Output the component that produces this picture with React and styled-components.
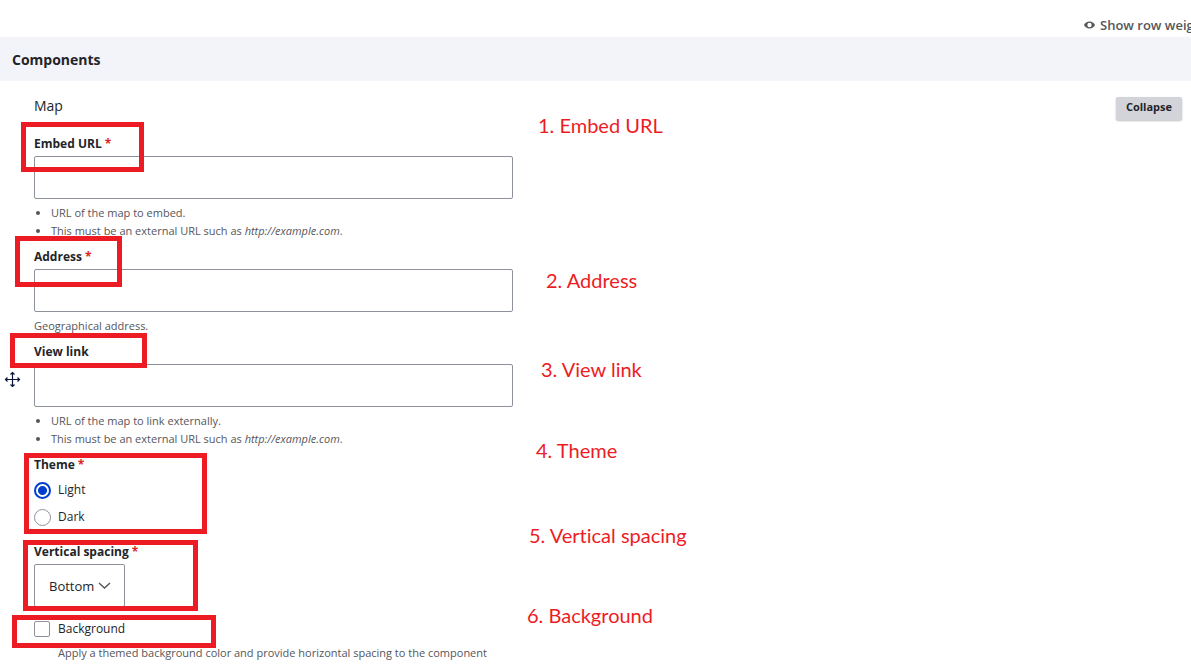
import React from "react";
import styled, { createGlobalStyle } from "styled-components";

const GlobalStyle = createGlobalStyle`
  *, *::before, *::after { box-sizing: border-box; }
  body {
    margin: 0;
    background: #fff;
    color: #232429;
    font-family: "Open Sans", "Noto Sans", sans-serif;
    font-size: 12px;
    line-height: 18px;
  }
  input, select, button { font-family: inherit; color: inherit; }
`;

const Page = styled.main`
  position: relative;
  height: 100vh;
  overflow: hidden;
`;

const TopBar = styled.div`
  display: flex;
  justify-content: flex-end;
  padding: 16px 0 3px;
`;

const WeightToggle = styled.button`
  display: flex;
  align-items: center;
  gap: 5px;
  width: 107px;
  padding: 0;
  border: 0;
  background: none;
  overflow: hidden;
  white-space: nowrap;
  color: #55565b;
  font-size: 13px;
  font-weight: 600;
  line-height: 18px;
  svg { flex: none; }
`;

const SectionHeader = styled.h2`
  margin: 0;
  padding: 14px 12px 12px;
  background: #f3f4f9;
  font-size: 14px;
  font-weight: 700;
  line-height: 18px;
`;

const ComponentRow = styled.section`
  display: flex;
  align-items: flex-start;
  padding-right: 9px;
`;

const DragHandle = styled.a`
  display: flex;
  align-self: center;
  flex: none;
  width: 34px;
  padding-left: 4px;
`;

const Form = styled.form`
  flex: 1;
  min-width: 0;
  padding: 16px 0;
`;

const TypeName = styled.div`
  margin-bottom: 20px;
  font-size: 14px;
`;

const CollapseButton = styled.button`
  flex: none;
  margin-top: 16px;
  padding: 1px 10px 4px;
  border: 0;
  border-radius: 2px;
  background: #d3d4d9;
  box-shadow: 0 1px 2px rgba(0, 0, 0, 0.25);
  font-size: 11px;
  font-weight: 700;
  line-height: 18px;
`;

const Field = styled.div`
  margin-bottom: ${(p) => (p.$last ? 13 : 8)}px;
`;

const Label = styled.label`
  display: block;
  margin-bottom: 3px;
  font-weight: 700;
`;

const Required = styled.span`
  margin-left: 3px;
  color: #dc2323;
`;

const TextInput = styled.input`
  display: block;
  width: 100%;
  max-width: 479px;
  height: 43px;
  padding: 0 14px;
  border: 1px solid #8e929c;
  border-radius: 2px;
  background: #fff;
  font-size: 13px;
`;

const Description = styled.div`
  margin-top: 5px;
  color: #55565b;
  font-size: 11px;
`;

const HintList = styled.ul`
  margin: 5px 0 0;
  padding-left: 17px;
  color: #55565b;
  font-size: 11px;
`;

const OptionGroup = styled.fieldset`
  min-width: 0;
  margin: 0 0 17px;
  padding: 0;
  border: 0;
`;

const Legend = styled.legend`
  padding: 0;
  font-weight: 700;
`;

const Options = styled.div`
  display: grid;
  gap: 9px;
  padding-top: 7px;
`;

const Option = styled.label`
  display: grid;
  grid-template-columns: 24px auto;
  justify-content: start;
  align-items: center;
`;

const Radio = styled.input`
  appearance: none;
  width: 17px;
  height: 17px;
  margin: 0;
  border: 1px solid #8e929c;
  border-radius: 50%;
  background: #fff;
  &:checked {
    border: 2px solid #003ecc;
    background: radial-gradient(circle, #003ecc 4px, #fff 5px);
  }
`;

const Checkbox = styled.input`
  appearance: none;
  width: 16px;
  height: 16px;
  margin: 0;
  border: 1px solid #8e929c;
  border-radius: 2px;
  background: #fff;
`;

const OptionNote = styled(Description)`
  margin-top: 6px;
  padding-left: 24px;
`;

const SelectWrap = styled.div`
  display: grid;
  grid-template-columns: 91px;
  align-items: center;
  svg {
    grid-area: 1 / 1;
    justify-self: end;
    margin-right: 14px;
    pointer-events: none;
  }
`;

const Select = styled.select`
  grid-area: 1 / 1;
  appearance: none;
  height: 43px;
  padding: 0 14px;
  border: 1px solid #8e929c;
  border-radius: 2px;
  background: #fff;
  font-size: 13px;
`;

const MarkerBox = styled.div`
  position: absolute;
  left: ${(p) => p.$x}px;
  top: ${(p) => p.$y}px;
  width: ${(p) => p.$w}px;
  height: ${(p) => p.$h}px;
  border: 5px solid #ed1c24;
  pointer-events: none;
`;

const MarkerNote = styled.div`
  position: absolute;
  left: ${(p) => p.$x}px;
  top: ${(p) => p.$y}px;
  color: #ed1c24;
  font-family: "Lato", "Open Sans", sans-serif;
  font-size: 20px;
  font-variant-ligatures: none;
  line-height: 24px;
  white-space: nowrap;
`;

const markers = [
  { note: "1. Embed URL", box: [21, 122, 123, 50], at: [538, 113] },
  { note: "2. Address", box: [15, 236, 107, 51], at: [546, 268] },
  { note: "3. View link", box: [10, 333, 137, 35], at: [541, 357] },
  { note: "4. Theme", box: [24, 453, 183, 81], at: [536, 438] },
  { note: "5. Vertical spacing", box: [23, 540, 175, 71], at: [529, 523] },
  { note: "6. Background", box: [12, 615, 204, 33], at: [527, 603] },
];

function EyeIcon() {
  return (
    <svg width="11" height="8" viewBox="0 0 11 8" aria-hidden="true">
      <path
        fill="#55565b"
        fillRule="evenodd"
        d="M5.5 0.5C3 0.5 1 1.9 0 4c1 2.1 3 3.5 5.5 3.5S10 6.1 11 4C10 1.9 8 0.5 5.5 0.5zM5.5 1.8a2.2 2.2 0 1 1 0 4.4a2.2 2.2 0 0 1 0-4.4z"
      />
    </svg>
  );
}

function MoveIcon() {
  return (
    <svg width="17" height="17" viewBox="0 0 17 17" fill="none" stroke="#0b1437" aria-hidden="true">
      <path d="M8.5 1.5v14M1.5 8.5h14" strokeWidth="1.2" />
      <path
        d="M6.5 3.5L8.5 1.5L10.5 3.5M6.5 13.5L8.5 15.5L10.5 13.5M3.5 6.5L1.5 8.5L3.5 10.5M13.5 6.5L15.5 8.5L13.5 10.5"
        strokeWidth="1.2"
      />
    </svg>
  );
}

function ChevronIcon() {
  return (
    <svg width="13" height="8" viewBox="0 0 13 8" fill="none" aria-hidden="true">
      <path d="M1 1L6.5 6L12 1" stroke="#55565b" strokeWidth="1.4" />
    </svg>
  );
}

function Star() {
  return <Required aria-hidden="true">*</Required>;
}

function UrlHints({ first }) {
  return (
    <HintList>
      <li>{first}</li>
      <li>
        This must be an external URL such as <em>http://example.com</em>.
      </li>
    </HintList>
  );
}

export default function App() {
  return (
    <>
      <GlobalStyle />
      <Page>
        <TopBar>
          <WeightToggle type="button">
            <EyeIcon />
            Show row weights
          </WeightToggle>
        </TopBar>
        <SectionHeader>Components</SectionHeader>
        <ComponentRow>
          <DragHandle href="#" aria-label="Drag to re-order">
            <MoveIcon />
          </DragHandle>
          <Form>
            <TypeName>Map</TypeName>
            <Field>
              <Label htmlFor="embed-url">
                Embed URL
                <Star />
              </Label>
              <TextInput id="embed-url" type="url" required />
              <UrlHints first="URL of the map to embed." />
            </Field>
            <Field>
              <Label htmlFor="address">
                Address
                <Star />
              </Label>
              <TextInput id="address" type="text" required />
              <Description>Geographical address.</Description>
            </Field>
            <Field>
              <Label htmlFor="view-link">View link</Label>
              <TextInput id="view-link" type="url" />
              <UrlHints first="URL of the map to link externally." />
            </Field>
            <OptionGroup>
              <Legend>
                Theme
                <Star />
              </Legend>
              <Options>
                <Option>
                  <Radio type="radio" name="theme" value="light" defaultChecked />
                  Light
                </Option>
                <Option>
                  <Radio type="radio" name="theme" value="dark" />
                  Dark
                </Option>
              </Options>
            </OptionGroup>
            <Field $last>
              <Label htmlFor="spacing">
                Vertical spacing
                <Star />
              </Label>
              <SelectWrap>
                <Select id="spacing" defaultValue="bottom">
                  <option value="bottom">Bottom</option>
                </Select>
                <ChevronIcon />
              </SelectWrap>
            </Field>
            <Option>
              <Checkbox type="checkbox" />
              Background
            </Option>
            <OptionNote>
              Apply a themed background color and provide horizontal spacing to the component
            </OptionNote>
          </Form>
          <CollapseButton type="button">Collapse</CollapseButton>
        </ComponentRow>
        {markers.map(({ note, box, at }) => (
          <React.Fragment key={note}>
            <MarkerBox $x={box[0]} $y={box[1]} $w={box[2]} $h={box[3]} />
            <MarkerNote $x={at[0]} $y={at[1]}>
              {note}
            </MarkerNote>
          </React.Fragment>
        ))}
      </Page>
    </>
  );
}
